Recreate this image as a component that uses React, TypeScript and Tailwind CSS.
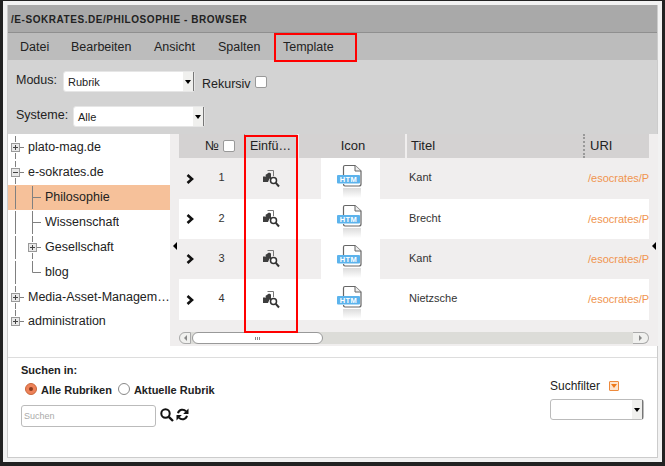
import { ReactNode } from "react";

type Part = "plus" | "minus" | "lastplus" | "tee" | "last" | "line";

interface TreeItem {
  label: string;
  parts: Part[];
  selected?: boolean;
}

const treeItems: TreeItem[] = [
  { label: "plato-mag.de", parts: ["plus"] },
  { label: "e-sokrates.de", parts: ["minus"] },
  { label: "Philosophie", parts: ["line", "tee"], selected: true },
  { label: "Wissenschaft", parts: ["line", "tee"] },
  { label: "Gesellschaft", parts: ["line", "plus"] },
  { label: "blog", parts: ["line", "last"] },
  { label: "Media-Asset-Management", parts: ["plus"] },
  { label: "administration", parts: ["lastplus"] },
];

const rows = [
  { no: 1, title: "Kant", h: "h-[41px]", bg: "bg-[#f0eeee]" },
  { no: 2, title: "Brecht", h: "h-[40px]", bg: "bg-white" },
  { no: 3, title: "Kant", h: "h-[40px]", bg: "bg-[#f0eeee]" },
  { no: 4, title: "Nietzsche", h: "h-[41px]", bg: "bg-white" },
];

function TreePart({ part }: { part: Part }) {
  const stroke = "#808080";
  const isBox = part === "plus" || part === "minus" || part === "lastplus";
  return (
    <svg width="17" height="25" className="shrink-0">
      {part === "line" && <line x1="7.5" y1="1" x2="7.5" y2="24" stroke={stroke} />}
      {part === "tee" && <path d="M7.5 1V24M8 12.5H16" stroke={stroke} fill="none" />}
      {part === "last" && <path d="M7.5 1V12.5H16" stroke={stroke} fill="none" />}
      {isBox && (
        <g>
          <path d={part === "lastplus" ? "M7.5 1V7M12 12.5H16" : "M7.5 1V7M7.5 18V24M12 12.5H16"} stroke={stroke} fill="none" />
          <rect x="3.5" y="8.5" width="8" height="8" fill="#e8e8e8" stroke="#999" />
          <path d={part === "minus" ? "M5 12.5H10" : "M5 12.5H10M7.5 10V15"} stroke="#444" fill="none" />
        </g>
      )}
    </svg>
  );
}

function ArrowDown({ className }: { className: string }) {
  return <div className={`flex items-center justify-center bg-[#f0f0ee] ${className}`}><div className="h-0 w-0 border-x-[3px] border-t-[4px] border-x-transparent border-t-black" /></div>;
}

function SelectBox({ label, width, border }: { label: string; width: string; border: string }) {
  return (
    <div className={`flex h-[21px] items-stretch rounded-[3px] border bg-white ${border} ${width}`}>
      <span className="flex-1 pl-[4px] text-[11px] leading-[20px] text-[#222]">{label}</span>
      <ArrowDown className="w-[11px] border-r border-[#777]" />
    </div>
  );
}

function CheckBox() {
  return <span className="inline-block h-[12px] w-[12px] rounded-[2px] border border-[#999] bg-white" />;
}

function EinfuegenIcon() {
  return (
    <svg width="18" height="18" viewBox="0 0 18 18">
      <path d="M5.5 0.5H11.5V6" fill="none" stroke="#777" />
      <path d="M1 6.5L4.2 6.5L3.4 5L7 2.5L9 3.5V9.5L7.5 8.5L6 12H1Z" fill="#3d3d3d" />
      <circle cx="11.5" cy="10.5" r="3" fill="#fff" stroke="#333" strokeWidth="1.5" />
      <path d="M13.8 12.8L17 16.5" stroke="#333" strokeWidth="2" />
    </svg>
  );
}

function HtmIcon() {
  return (
    <svg width="36" height="38" viewBox="0 0 36 38">
      <defs>
        <linearGradient id="fade" x1="0" y1="0" x2="0" y2="1">
          <stop offset="0" stopColor="#dcdcdc" />
          <stop offset="1" stopColor="#ffffff" />
        </linearGradient>
      </defs>
      <rect x="10" y="28" width="18" height="10" fill="url(#fade)" />
      <path d="M10.5 15V7Q10.5 5.5 12 5.5H22L28 11V24Q28 26 26 26H12Q10.5 26 10.5 24" fill="#fff" stroke="#666" strokeWidth="1.2" />
      <path d="M22 5.5V11H28" fill="#eee" stroke="#666" strokeWidth="1" />
      <rect x="4" y="15" width="23" height="8.5" rx="1" fill="#5cb3ec" />
      <text x="15.5" y="22" textAnchor="middle" fontSize="7.5" fontWeight="700" letterSpacing="0.4" fill="#fff" fontFamily="Liberation Sans, sans-serif">HTM</text>
    </svg>
  );
}

function SearchIcon() {
  return (
    <svg width="14" height="14" viewBox="0 0 14 14">
      <circle cx="5.5" cy="5.5" r="4.2" fill="none" stroke="#111" strokeWidth="2" />
      <path d="M8.8 8.8L13 13" stroke="#111" strokeWidth="2.4" />
    </svg>
  );
}

function RefreshIcon() {
  return (
    <svg width="13" height="13" viewBox="0 0 13 13">
      <path d="M2 5.2A4.6 4.6 0 0 1 10 3.4" fill="none" stroke="#111" strokeWidth="2" />
      <path d="M12.5 0.5V6H7.2Z" fill="#111" />
      <path d="M11 7.8A4.6 4.6 0 0 1 3 9.6" fill="none" stroke="#111" strokeWidth="2" />
      <path d="M0.5 12.5V7H5.8Z" fill="#111" />
    </svg>
  );
}

function HeaderCell({ className, children }: { className: string; children: ReactNode }) {
  return <div className={`flex items-center bg-[#d4d2d2] text-[13px] text-[#222] ${className}`}>{children}</div>;
}

export default function App() {
  return (
    <div className="h-[466px] w-[665px] overflow-hidden bg-[#222] pl-[3px] pt-px font-['Liberation_Sans',Arial,sans-serif]">
      <div className="h-[461px] w-[659px] bg-[#f2f2f2] p-[4px]">
        <div className="relative flex h-[453px] w-[651px] flex-col border-x border-b border-[#ccc] bg-white">
          <div className="flex h-[28px] shrink-0 items-center border-b border-[#8f8f8f] bg-[#a9a9a9] pl-[3px] pt-[2px] text-[10px] font-bold tracking-[0.55px] text-[#222]">
            /E-SOKRATES.DE/PHILOSOPHIE - BROWSER
          </div>
          <div className="flex h-[27px] shrink-0 items-center bg-[#bcbcbc] pl-[12px] pt-[1px] text-[12.5px] text-[#222]">
            <span className="w-[51px]">Datei</span>
            <span className="w-[83px]">Bearbeiten</span>
            <span className="w-[64px]">Ansicht</span>
            <span className="w-[65px]">Spalten</span>
            <span>Template</span>
          </div>
          <div className="h-[74px] shrink-0 bg-[#d3d3d3] pl-[8px] text-[12.5px] text-[#222]">
            <div className="flex items-start pt-[11px]">
              <span className="w-[47px] leading-[18px]">Modus:</span>
              <SelectBox label="Rubrik" width="w-[132px]" border="border-[#e6e6e6]" />
              <span className="ml-[7px] mt-[3px] leading-[20px]">Rekursiv</span>
              <span className="ml-[4px] mt-[5px] flex"><CheckBox /></span>
            </div>
            <div className="mt-[12px] flex items-start">
              <span className="w-[57px] leading-[18px]">Systeme:</span>
              <SelectBox label="Alle" width="w-[132px]" border="border-[#e6e6e6]" />
            </div>
          </div>

          <div className="flex h-[212px] shrink-0">
            <div className="w-[162px] shrink-0 bg-white pt-px text-[12.5px] text-[#222]">
              {treeItems.map((item) => (
                <div key={item.label} className={`flex h-[25px] items-center last:-mt-px ${item.selected ? "bg-[#f6c19a]" : ""}`}>
                  {item.parts.map((p, i) => <TreePart key={i} part={p} />)}
                  <span className="ml-[3px] min-w-0 truncate">{item.label}</span>
                </div>
              ))}
            </div>
            <div className="flex w-[9px] shrink-0 items-center justify-center bg-[#f0eeee] pt-[12px]">
              <div className="h-0 w-0 border-y-[4px] border-r-[4px] border-y-transparent border-r-black" />
            </div>
            <div className="flex w-[470px] shrink-0 flex-col bg-[#f0eeee]">
              <div className="flex h-[24px] shrink-0 bg-[#f0eeee]">
                <HeaderCell className="w-[65px] justify-end gap-[4px] pr-[9px]"><span>№</span><CheckBox /></HeaderCell>
                <HeaderCell className="w-[53px] justify-center border-l border-dotted border-[#999]"><span className="w-[42px] truncate text-[12.5px]">Einfügen</span></HeaderCell>
                <HeaderCell className="ml-[2px] w-[106px] justify-center pl-[2px]">Icon</HeaderCell>
                <HeaderCell className="ml-[2px] w-[176px] pl-[4px]">Titel</HeaderCell>
                <HeaderCell className="w-[66px] border-l-2 border-dotted border-[#999] pl-[5px]">URI</HeaderCell>
              </div>
              {rows.map((r) => (
                <div key={r.no} className={`flex shrink-0 items-center text-[11px] text-[#333] ${r.h} ${r.bg}`}>
                  <div className="flex w-[21px] justify-center pl-[1px]">
                    <svg width="8" height="10" viewBox="0 0 8 10"><path d="M1.5 1L6 5L1.5 9" fill="none" stroke="#111" strokeWidth="2.6" /></svg>
                  </div>
                  <div className="w-[44px] pb-[2px] pr-[1px] text-center">{r.no}</div>
                  <div className="flex w-[53px] justify-center"><EinfuegenIcon /></div>
                  <div className="ml-[24px] flex h-full w-[59px] items-center justify-center bg-white"><HtmIcon /></div>
                  <div className="ml-[29px] w-[176px] pb-[2px]">{r.title}</div>
                  <div className="w-[64px] overflow-hidden whitespace-nowrap pl-[3px] text-[#f0954f]">/esocrates/Philosophie</div>
                </div>
              ))}
              <div className="mt-[12px] flex h-[12px] shrink-0 items-stretch rounded-[6px] bg-[#dcdcd8]">
                <div className="flex w-[12px] items-center justify-center rounded-l-[6px] border border-[#aaa] bg-[#f0f0ee]">
                  <div className="h-0 w-0 border-y-[3px] border-r-[3px] border-y-transparent border-r-[#888]" />
                </div>
                <div className="ml-[1px] flex w-[131px] items-center justify-center gap-[1px] rounded-[6px] border border-[#999] bg-white">
                  <span className="h-[3px] w-px bg-[#888]" /><span className="h-[3px] w-px bg-[#888]" /><span className="h-[3px] w-px bg-[#888]" />
                </div>
                <div className="ml-auto flex w-[16px] items-center justify-center rounded-r-[6px] border-y border-r border-[#aaa] bg-[#f0f0ee]">
                  <div className="h-0 w-0 border-y-[3px] border-l-[3px] border-y-transparent border-l-[#888]" />
                </div>
              </div>
            </div>
            <div className="flex w-[9px] shrink-0 items-center justify-center bg-[#f0eeee] pt-[12px]">
              <div className="h-0 w-0 border-y-[4px] border-r-[4px] border-y-transparent border-r-black" />
            </div>
          </div>

          <div className="h-[12px] shrink-0 border-b border-[#ddd]" />
          <div className="flex flex-1 justify-between px-[13px]">
            <div>
              <div className="mt-[6px] text-[11px] font-bold leading-[13px] text-[#222]">Suchen in:</div>
              <div className="mt-[6px] flex items-end pl-[4px] text-[11px] font-bold leading-[13px] text-[#222]">
                <span className="mb-[2px] flex h-[12px] w-[12px] items-center justify-center rounded-full border border-[#c9673a] bg-[#ee8259]"><span className="h-[4px] w-[4px] rounded-full bg-[#8a3a1c]" /></span>
                <span className="ml-[4px]">Alle Rubriken</span>
                <span className="mb-[2px] ml-[6px] h-[12px] w-[12px] rounded-full border border-[#888] bg-white" />
                <span className="ml-[4px]">Aktuelle Rubrik</span>
              </div>
              <div className="mt-[8px] flex items-start">
                <div className="h-[22px] w-[135px] rounded-[3px] border border-[#bbb] bg-white pl-[2px] text-[9px] leading-[20px] text-[#aaa]">Suchen</div>
                <span className="ml-[4px] mt-[3px]"><SearchIcon /></span>
                <span className="ml-[2px] mt-[3px]"><RefreshIcon /></span>
              </div>
            </div>
            <div className="w-[94px] pt-[21px]">
              <div className="flex items-center text-[12px] leading-[14px] text-[#222]">
                Suchfilter
                <span className="ml-[9px] flex h-[10px] w-[10px] items-center justify-center rounded-[1px] border border-[#ee8a3c] bg-[#fde4cf]"><span className="h-0 w-0 border-x-[3px] border-t-[4px] border-x-transparent border-t-[#ee7a1c]" /></span>
              </div>
              <div className="mt-[6px]"><SelectBox label="" width="w-[94px]" border="border-[#bbb]" /></div>
            </div>
          </div>

          <div className="absolute left-[266px] top-[28px] h-[29px] w-[83px] border-2 border-[#f00]" />
          <div className="absolute left-[236px] top-[130px] h-[198px] w-[54px] border-2 border-[#f00]" />
        </div>
      </div>
    </div>
  );
}
